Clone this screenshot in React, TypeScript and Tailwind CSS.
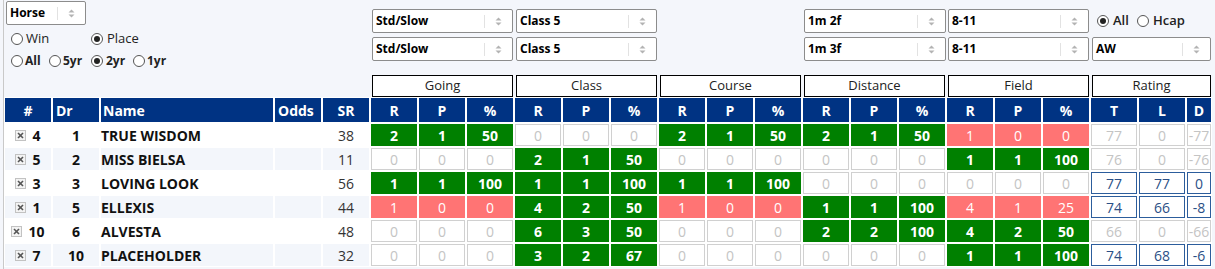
import React from 'react';

type Kind = 'g' | 'p' | 'z';

const rows = [
  { n: '4', dr: '1', name: 'TRUE WISDOM', sr: '38', stats: [[2, 1, 50], [0, 0, 0], [2, 1, 50], [2, 1, 50], [1, 0, 0]], rating: [77, 0, -77] },
  { n: '5', dr: '2', name: 'MISS BIELSA', sr: '11', stats: [[0, 0, 0], [2, 1, 50], [0, 0, 0], [0, 0, 0], [1, 1, 100]], rating: [76, 0, -76] },
  { n: '3', dr: '3', name: 'LOVING LOOK', sr: '56', stats: [[1, 1, 100], [1, 1, 100], [1, 1, 100], [0, 0, 0], [0, 0, 0]], rating: [77, 77, 0] },
  { n: '1', dr: '5', name: 'ELLEXIS', sr: '44', stats: [[1, 0, 0], [4, 2, 50], [1, 0, 0], [1, 1, 100], [4, 1, 25]], rating: [74, 66, -8] },
  { n: '10', dr: '6', name: 'ALVESTA', sr: '48', stats: [[0, 0, 0], [6, 3, 50], [0, 0, 0], [2, 2, 100], [4, 2, 50]], rating: [66, 0, -66] },
  { n: '7', dr: '10', name: 'PLACEHOLDER', sr: '32', stats: [[0, 0, 0], [3, 2, 67], [0, 0, 0], [0, 0, 0], [1, 1, 100]], rating: [74, 68, -6] },
];

function Arrows() {
  return (
    <svg width="7" height="11" viewBox="0 0 7 11">
      <polygon points="0.5,4.5 3.5,1.5 6.5,4.5" fill="#b3b3b3" />
      <polygon points="0.5,6.5 3.5,9.5 6.5,6.5" fill="#b3b3b3" />
    </svg>
  );
}

function Select({ label }: { label: string }) {
  return (
    <div className="h-[24px] bg-white border border-[#8c8c8c] rounded-[2px] flex items-center">
      <span className="flex-1 pl-[3px] text-[12px] font-bold text-black leading-none">{label}</span>
      <span className="w-px h-[13px] bg-[#e2e2e2]" />
      <span className="w-[27px] flex items-center justify-center">
        <Arrows />
      </span>
    </div>
  );
}

function Radio({ checked }: { checked?: boolean }) {
  return (
    <span className="w-[12px] h-[12px] rounded-full border border-[#555] bg-white flex items-center justify-center shrink-0">
      {checked ? <span className="w-[6px] h-[6px] rounded-full bg-[#222]" /> : null}
    </span>
  );
}

function Check() {
  return (
    <svg width="11" height="11" viewBox="0 0 11 11" className="shrink-0">
      <rect x="0.5" y="0.5" width="10" height="10" fill="#f3f3f3" stroke="#c2c2c2" />
      <line x1="3" y1="3" x2="8" y2="8" stroke="#555" strokeWidth="1.6" />
      <line x1="8" y1="3" x2="3" y2="8" stroke="#555" strokeWidth="1.6" />
    </svg>
  );
}

function StatCell({ v, kind }: { v: number; kind: Kind }) {
  if (kind === 'z') {
    return (
      <div className="w-[48px] h-full border border-white bg-white">
        <div className="h-full border border-[#d0d0d0] flex items-center justify-center text-[#c4c4c4]">{v}</div>
      </div>
    );
  }
  if (kind === 'g') {
    return (
      <div className="w-[48px] h-full border border-white bg-[#008000] text-white font-bold flex items-center justify-center">{v}</div>
    );
  }
  return (
    <div className="w-[48px] h-full border border-white bg-[#ff7474] text-white flex items-center justify-center">{v}</div>
  );
}

function RatingCell({ v, blue, narrow }: { v: number; blue: boolean; narrow?: boolean }) {
  return (
    <div className={narrow ? 'w-[26px] h-full border border-white bg-white' : 'w-[48px] h-full border border-white bg-white'}>
      <div
        className={
          blue
            ? 'h-full border border-[#2c5d9c] flex items-center justify-center text-[#2b4f86]'
            : 'h-full border border-[#d0d0d0] flex items-center justify-center text-[#c4c4c4]'
        }
      >
        {v}
      </div>
    </div>
  );
}

function GroupBox({ label, w }: { label: string; w: string }) {
  return (
    <div className={w}>
      <div className="ml-[2px] mr-[1px] mt-[1px] h-[22px] bg-white border border-black flex items-center justify-center text-[13px] text-[#222]">
        {label}
      </div>
    </div>
  );
}

export default function App() {
  const groups = ['Going', 'Class', 'Course', 'Distance', 'Field'];
  return (
    <div className="w-[1215px] h-[269px] bg-[#f4f6fb] pl-[3px] font-['Open_Sans',sans-serif] text-[14px] text-[#111] overflow-hidden">
      <div className="h-full border-l border-[#c9c9c9] w-[1209px]">
        {/* top controls */}
        <div className="flex h-[74px]">
          <div className="w-[366px] flex flex-col">
            <div className="ml-[2px] mt-[1px] w-[80px]">
              <Select label="Horse" />
            </div>
            <div className="flex items-center h-[16px] mt-[6px] ml-[7px]">
              <label className="w-[80px] flex items-center gap-[3px] text-[13px] text-[#222]">
                <Radio /> Win
              </label>
              <label className="flex items-center gap-[4px] text-[13px] text-[#222]">
                <Radio checked /> Place
              </label>
            </div>
            <div className="flex items-center h-[16px] mt-[6px] ml-[7px] text-[12px] font-bold text-[#222]">
              <label className="w-[38px] flex items-center gap-[2px]">
                <Radio /> All
              </label>
              <label className="w-[42px] flex items-center gap-[2px]">
                <Radio /> 5yr
              </label>
              <label className="w-[42px] flex items-center gap-[3px]">
                <Radio checked /> 2yr
              </label>
              <label className="flex items-center gap-[2px]">
                <Radio /> 1yr
              </label>
            </div>
          </div>
          <div className="w-[144px] pl-[2px] pr-[1px] pt-[9px] flex flex-col gap-[4px]">
            <Select label="Std/Slow" />
            <Select label="Std/Slow" />
          </div>
          <div className="w-[144px] pl-[2px] pr-[1px] pt-[9px] flex flex-col gap-[4px]">
            <Select label="Class 5" />
            <Select label="Class 5" />
          </div>
          <div className="w-[144px]" />
          <div className="w-[144px] pl-[2px] pt-[9px] flex flex-col gap-[4px]">
            <Select label="1m 2f" />
            <Select label="1m 3f" />
          </div>
          <div className="w-[144px] pl-[2px] pr-[1px] pt-[9px] flex flex-col gap-[4px]">
            <Select label="8-11" />
            <Select label="8-11" />
          </div>
          <div className="w-[122px] pl-[2px] pr-[1px] pt-[9px] flex flex-col gap-[4px]">
            <div className="h-[24px] flex items-center pl-[5px] text-[13px] font-semibold text-[#222]">
              <label className="w-[40px] flex items-center gap-[4px]">
                <Radio checked /> All
              </label>
              <label className="flex items-center gap-[4px]">
                <Radio /> Hcap
              </label>
            </div>
            <Select label="AW" />
          </div>
        </div>

        {/* group header row */}
        <div className="flex h-[23px]">
          <div className="w-[366px]" />
          {groups.map((g) => (
            <GroupBox key={g} label={g} w="w-[144px]" />
          ))}
          <GroupBox label="Rating" w="w-[122px]" />
        </div>

        {/* column header */}
        <div className="flex h-[26px] text-white font-bold">
          <div className="w-[48px] border border-white bg-[#003383] flex items-center justify-center">#</div>
          <div className="w-[48px] border border-white bg-[#003383] flex items-center pl-[3px]">Dr</div>
          <div className="w-[174px] border border-white bg-[#003383] flex items-center pl-[2px]">Name</div>
          <div className="w-[48px] border border-white bg-[#003383] flex items-center pl-[3px]">Odds</div>
          <div className="w-[48px] border border-white bg-[#003383] flex items-center justify-center">SR</div>
          {groups.map((g) => (
            <React.Fragment key={g}>
              <div className="w-[48px] border border-white bg-[#003383] flex items-center justify-center">R</div>
              <div className="w-[48px] border border-white bg-[#003383] flex items-center justify-center">P</div>
              <div className="w-[48px] border border-white bg-[#003383] flex items-center justify-center">%</div>
            </React.Fragment>
          ))}
          <div className="w-[48px] border border-white bg-[#003383] flex items-center justify-center">T</div>
          <div className="w-[48px] border border-white bg-[#003383] flex items-center justify-center">L</div>
          <div className="w-[26px] border border-white bg-[#003383] flex items-center justify-center">D</div>
        </div>

        {/* data rows */}
        {rows.map((r, i) => {
          const bg = i % 2 === 1 ? 'bg-[#f3f6fb]' : 'bg-white';
          const blue = r.rating[1] !== 0;
          return (
            <div key={r.name} className="flex h-[24px]">
              <div className={`w-[48px] border border-white ${bg} flex items-center justify-center gap-[6px] font-bold`}>
                <Check />
                <span>{r.n}</span>
              </div>
              <div className={`w-[48px] border border-white ${bg} flex items-center justify-center font-bold`}>{r.dr}</div>
              <div className={`w-[174px] border border-white ${bg} flex items-center font-bold`}>{r.name}</div>
              <div className={`w-[48px] border border-white ${bg}`} />
              <div className={`w-[48px] border border-white ${bg} flex items-center justify-center text-[#333]`}>{r.sr}</div>
              {r.stats.map((s, gi) =>
                s.map((v, ci) => {
                  const kind: Kind = s[0] === 0 ? 'z' : s[2] >= 50 ? 'g' : 'p';
                  return <StatCell key={`${gi}-${ci}`} v={v} kind={kind} />;
                })
              )}
              <RatingCell v={r.rating[0]} blue={blue} />
              <RatingCell v={r.rating[1]} blue={blue} />
              <RatingCell v={r.rating[2]} blue={blue} narrow />
            </div>
          );
        })}
      </div>
    </div>
  );
}
